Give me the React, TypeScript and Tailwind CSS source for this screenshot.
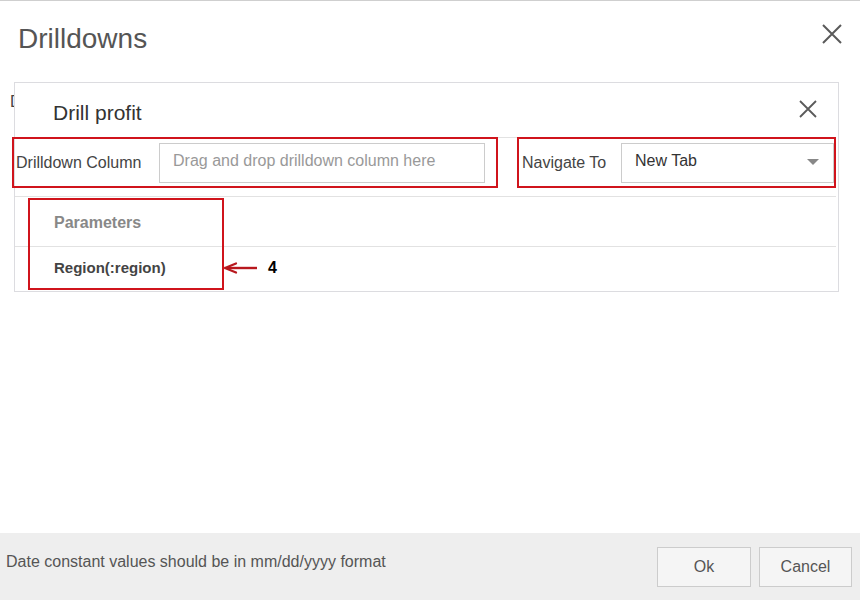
import React from "react";

const CloseIcon = ({ size, stroke }: { size: number; stroke: number }) => (
  <svg width={size} height={size} viewBox={`0 0 ${size} ${size}`} fill="none">
    <path
      d={`M1 1L${size - 1} ${size - 1}M${size - 1} 1L1 ${size - 1}`}
      stroke="#5a5a5a"
      strokeWidth={stroke}
    />
  </svg>
);

const App = () => {
  return (
    <div className="w-[860px] h-[600px] flex flex-col bg-white border-t border-[#cfcfcf] font-['Liberation_Sans',Arial,sans-serif] overflow-hidden">
      {/* dialog header */}
      <div className="h-[81px] flex items-start justify-between pl-[18px] pr-[18px] pt-[22px]">
        <h1 className="text-[28px] leading-[32px] text-[#555]">Drilldowns</h1>
        <div className="mt-[1px]">
          <CloseIcon size={20} stroke={2} />
        </div>
      </div>

      {/* body */}
      <div className="flex-1 flex items-start">
        <span className="ml-[10px] mt-[8px] w-[4px] overflow-hidden text-[16px] text-[#444] whitespace-nowrap">
          D
        </span>

        <div className="w-[825px] h-[210px] border border-[#dcdce0] bg-white flex flex-col">
          <div className="h-[54px] flex items-start justify-between pl-[38px] pr-[21px]">
            <span className="mt-[14px] text-[21px] text-[#333]">Drill profit</span>
            <div className="mt-[17px]">
              <CloseIcon size={18} stroke={1.8} />
            </div>
          </div>

          {/* drilldown column / navigate row */}
          <div className="mr-[2px] border-t border-b border-[#e2e2e2] pb-[8px] flex">
            <div className="-mt-px -ml-[3px] w-[487px] h-[51px] border-2 border-[#d0141c] flex items-center pl-[2px]">
              <span className="w-[143px] text-[16px] text-[#444]">Drilldown Column</span>
              <div className="w-[326px] h-[40px] border border-[#cccccc] pl-[13px] pt-[8px] text-[16px] text-[#999] leading-[18px]">
                Drag and drop drilldown column here
              </div>
            </div>
            <div className="-mt-px ml-[19px] w-[319px] h-[51px] border-2 border-[#d0141c] flex items-center pl-[3px]">
              <span className="w-[99px] text-[16px] text-[#444]">Navigate To</span>
              <div className="w-[213px] h-[40px] border border-[#cccccc] pl-[13px] pr-[14px] pt-[8px] flex items-start justify-between text-[16px] text-[#333] leading-[18px]">
                <span>New Tab</span>
                <span className="mt-[7px] w-0 h-0 border-l-[6px] border-r-[6px] border-t-[6px] border-l-transparent border-r-transparent border-t-[#888]" />
              </div>
            </div>
          </div>

          {/* parameters */}
          <div className="relative mr-[2px] flex flex-col">
            <div className="h-[50px] border-b border-[#e2e2e2] flex items-center pl-[39px] pt-[2px] text-[16px] font-semibold text-[#888]">
              Parameters
            </div>
            <div className="h-[42px] flex items-center pl-[39px] text-[15px] font-bold text-[#444]">
              Region(:region)
            </div>

            {/* annotation overlay */}
            <div className="absolute left-[13px] top-[1px] w-[196px] h-[92px] border-2 border-[#d0141c]" />
            <svg className="absolute left-[209px] top-[65px]" width="36" height="12" viewBox="0 0 36 12">
              <path d="M3 6H33" stroke="#b8181e" strokeWidth="2.4" />
              <path d="M1 6L12 1.5M1 6L12 10.5" stroke="#b8181e" strokeWidth="2.2" strokeLinecap="round" />
            </svg>
            <span className="absolute left-[253px] top-[62px] text-[16px] font-bold text-black leading-[18px]">
              4
            </span>
          </div>
        </div>
      </div>

      {/* footer */}
      <div className="h-[67px] bg-[#eeeeee] flex items-start justify-between pl-[6px] pr-[8px]">
        <p className="pt-[17px] text-[16px] text-[#555]">
          Date constant values should be in mm/dd/yyyy format
        </p>
        <div className="pt-[14px] flex gap-2">
          <button className="w-[94px] h-[40px] border border-[#cccccc] bg-[#f5f5f5] text-[16px] text-[#555]">
            Ok
          </button>
          <button className="w-[93px] h-[40px] border border-[#cccccc] bg-[#f5f5f5] text-[16px] text-[#555]">
            Cancel
          </button>
        </div>
      </div>
    </div>
  );
};

export default App;
